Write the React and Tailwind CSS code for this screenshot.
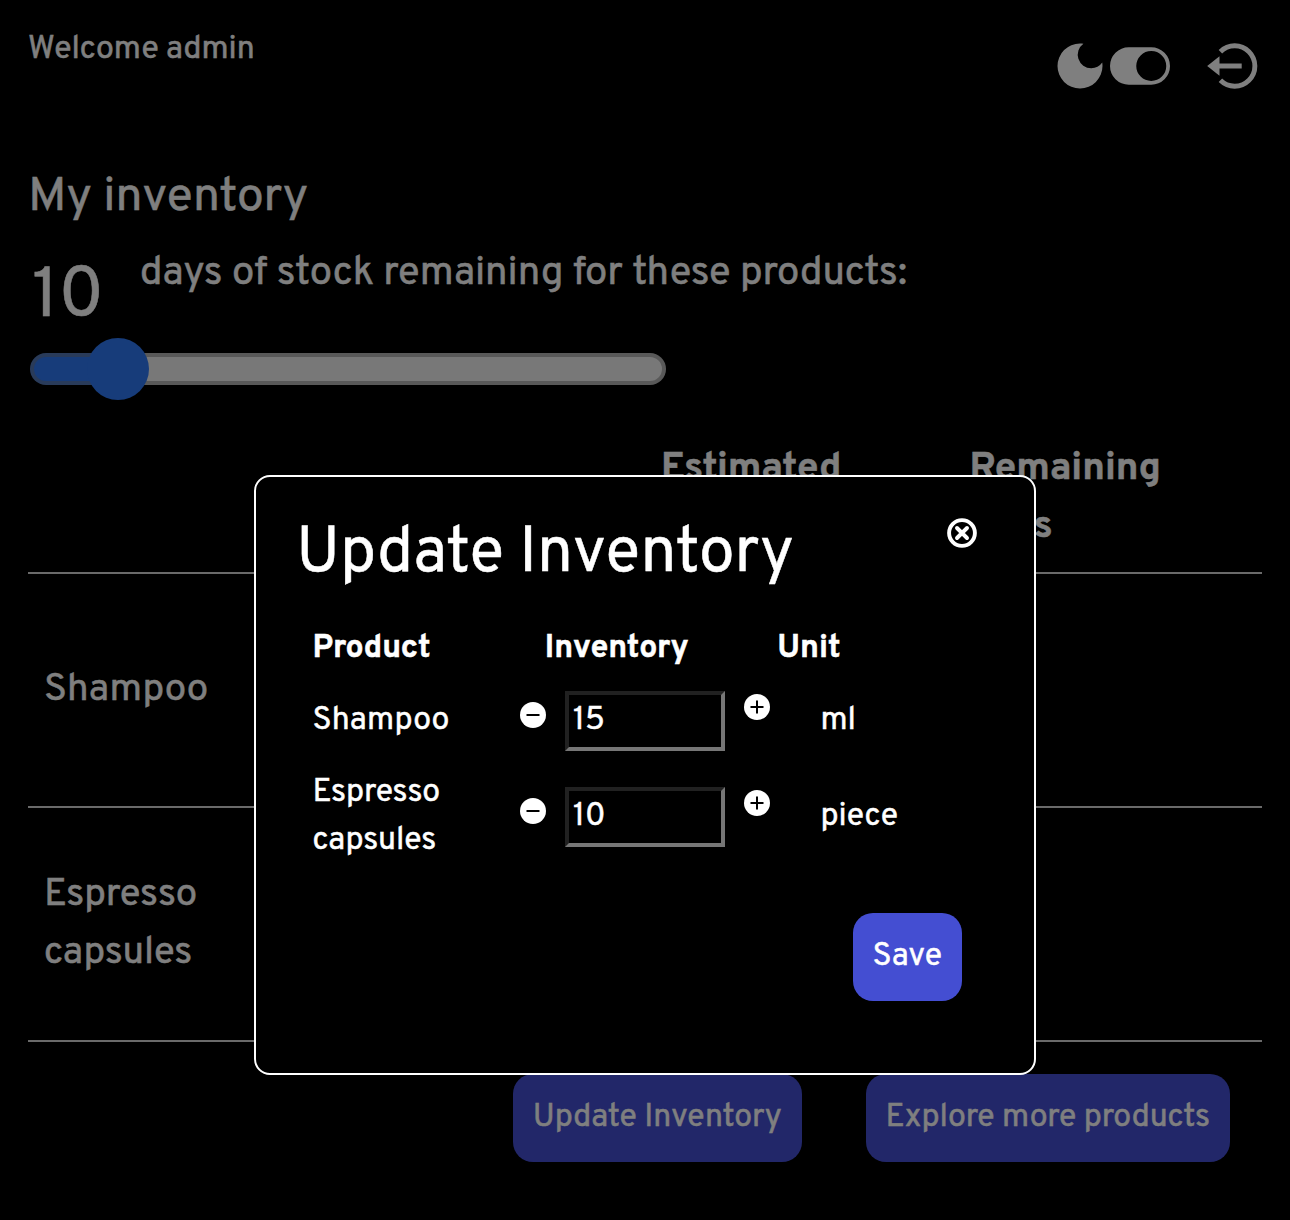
import { useState } from "react";

function MoonIcon() {
  return (
    <svg viewBox="0 0 24 24" className="size-[60px]" fill="currentColor" aria-hidden="true">
      <path d="M12 3a9 9 0 1 0 9 9c0-.46-.04-.92-.1-1.36a5.389 5.389 0 0 1-4.4 2.26 5.403 5.403 0 0 1-3.14-9.8c-.44-.06-.9-.1-1.36-.1z" />
    </svg>
  );
}

function ToggleIcon() {
  return (
    <svg viewBox="0 0 16 16" className="size-[60px]" fill="currentColor" aria-hidden="true">
      <path d="M5 3a5 5 0 0 0 0 10h6a5 5 0 0 0 0-10H5zm6 9a4 4 0 1 1 0-8 4 4 0 0 1 0 8z" />
    </svg>
  );
}

function LogoutIcon() {
  return (
    <svg viewBox="0 0 60 60" className="size-[60px]" aria-hidden="true">
      <path d="M20.4 15.7a20.2 20.2 0 1 1 0 28.6" fill="none" stroke="currentColor" strokeWidth="4.9" />
      <path d="M17 30h24.7" fill="none" stroke="currentColor" strokeWidth="5" />
      <path d="M7.2 30 19.5 20.3v19.4z" fill="currentColor" />
    </svg>
  );
}

function CloseIcon() {
  return (
    <svg viewBox="0 0 30 30" className="size-[30px]" fill="none" stroke="currentColor" strokeWidth="3.9" aria-hidden="true">
      <circle cx="15" cy="15" r="12.9" />
      <path d="m10 10 10 10M20 10 10 20" strokeLinecap="round" />
    </svg>
  );
}

function StepIcon({ plus }) {
  return (
    <svg viewBox="0 0 26 26" className="size-[26px]" aria-hidden="true">
      <circle cx="13" cy="13" r="13" fill="#fff" />
      <path d={plus ? "M6.5 13h13M13 6.5v13" : "M6.5 13h13"} stroke="#000" strokeWidth="2" />
    </svg>
  );
}

function PrimaryButton({ children }) {
  return (
    <button className="rounded-[20px] bg-[#444ed2] p-5 text-[32px] leading-[48px] whitespace-nowrap text-white">
      {children}
    </button>
  );
}

function StockSlider({ percent }) {
  return (
    <div className="relative mt-[1px] ml-[2px] h-8 w-[636px]">
      <div
        className="h-8 rounded-full border-4 border-[#767676]/50 bg-origin-border"
        style={{ backgroundImage: `linear-gradient(to right, #2e78f4 ${percent}%, #f0f0f0 ${percent}%)` }}
      />
      <div
        className="absolute top-1/2 size-[62px] -translate-x-1/2 -translate-y-1/2 rounded-full bg-[#2e78f4]"
        style={{ left: `${percent}%` }}
      />
    </div>
  );
}

function StockTable() {
  return (
    <table className="mt-[40px] w-full table-fixed border-collapse text-left text-[38.4px] leading-[57.6px]">
      <thead>
        <tr className="h-[148px] border-b-2 border-[#d4d4d4] align-top font-bold">
          <th className="px-4 pt-4"></th>
          <th className="px-4 pt-4"></th>
          <th className="px-4 pt-4">Estimated</th>
          <th className="px-4 pt-4">Remaining days</th>
        </tr>
      </thead>
      <tbody>
        {["Shampoo", "Espresso capsules"].map((name) => (
          <tr key={name} className="h-[234px] border-b-2 border-[#d4d4d4]">
            <td className="pt-px pr-[120px] pl-4">{name}</td>
            <td></td>
            <td></td>
            <td></td>
          </tr>
        ))}
      </tbody>
    </table>
  );
}

function InventoryRow({ name, unit, initial }) {
  const [value, setValue] = useState(initial);
  return (
    <div className="flex items-center py-3">
      <div className="w-[219.5px] pl-3">
        <div className="w-[150px]">{name}</div>
      </div>
      <button className="-mt-3" onClick={() => setValue(value - 1)} aria-label="Decrease">
        <StepIcon />
      </button>
      <input
        className="-my-2 ml-[19px] h-[60px] w-[160px] border-4 border-t-[#212121] border-r-[#767676] border-b-[#767676] border-l-[#212121] bg-black px-1"
        value={value}
        onChange={(e) => setValue(Number(e.target.value) || 0)}
        aria-label={name}
      />
      <button className="-mt-7 ml-[19px]" onClick={() => setValue(value + 1)} aria-label="Increase">
        <StepIcon plus />
      </button>
      <div className="ml-[50.5px]">{unit}</div>
    </div>
  );
}

function UpdateDialog() {
  return (
    <div className="absolute top-[475px] left-[254px] flex h-[600px] w-[782px] flex-col rounded-2xl border-2 border-white bg-black text-[32px] leading-[48px] text-white">
      <div className="flex justify-between pt-[30px] pr-[57px] pl-10">
        <h2 className="text-[64px] leading-[96px]">Update Inventory</h2>
        <button className="mt-[11px] h-[30px]" aria-label="Close">
          <CloseIcon />
        </button>
      </div>
      <div className="mt-[10px] ml-[44.5px] w-[697px]">
        <div className="grid grid-cols-3 py-3 font-bold">
          <span className="pl-3">Product</span>
          <span className="pl-3">Inventory</span>
          <span className="pl-3">Unit</span>
        </div>
        <InventoryRow name="Shampoo" unit="ml" initial={15} />
        <InventoryRow name="Espresso capsules" unit="piece" initial={10} />
      </div>
      <div className="mt-[36px] flex justify-end pr-[72px]">
        <PrimaryButton>Save</PrimaryButton>
      </div>
    </div>
  );
}

export default function App() {
  return (
    <div className="relative h-[1220px] w-[1290px] overflow-hidden bg-black font-['Overpass','Roboto',sans-serif] text-white [-webkit-text-stroke:0.5px]">
      <div className="px-7">
        <header className="flex h-[162px] justify-between pt-[26px]">
          <p className="text-[32px] leading-[48px]">Welcome admin</p>
          <div className="mt-[10px] mr-[2px] flex h-[60px]">
            <MoonIcon />
            <ToggleIcon />
            <div className="ml-[30px]">
              <LogoutIcon />
            </div>
          </div>
        </header>
        <h1 className="text-[48px] leading-[72px]">My inventory</h1>
        <div className="mt-[10px] flex h-[108px] pl-1">
          <span className="w-[108px] text-[71px] leading-[108px]">10</span>
          <span className="text-[40px] leading-[60px]">days of stock remaining for these products:</span>
        </div>
        <StockSlider percent={13.84} />
        <StockTable />
        <div className="mt-8 mr-[32px] flex justify-end gap-16">
          <PrimaryButton>Update Inventory</PrimaryButton>
          <PrimaryButton>Explore more products</PrimaryButton>
        </div>
      </div>
      <div className="absolute inset-0 bg-black/50" />
      <UpdateDialog />
    </div>
  );
}
